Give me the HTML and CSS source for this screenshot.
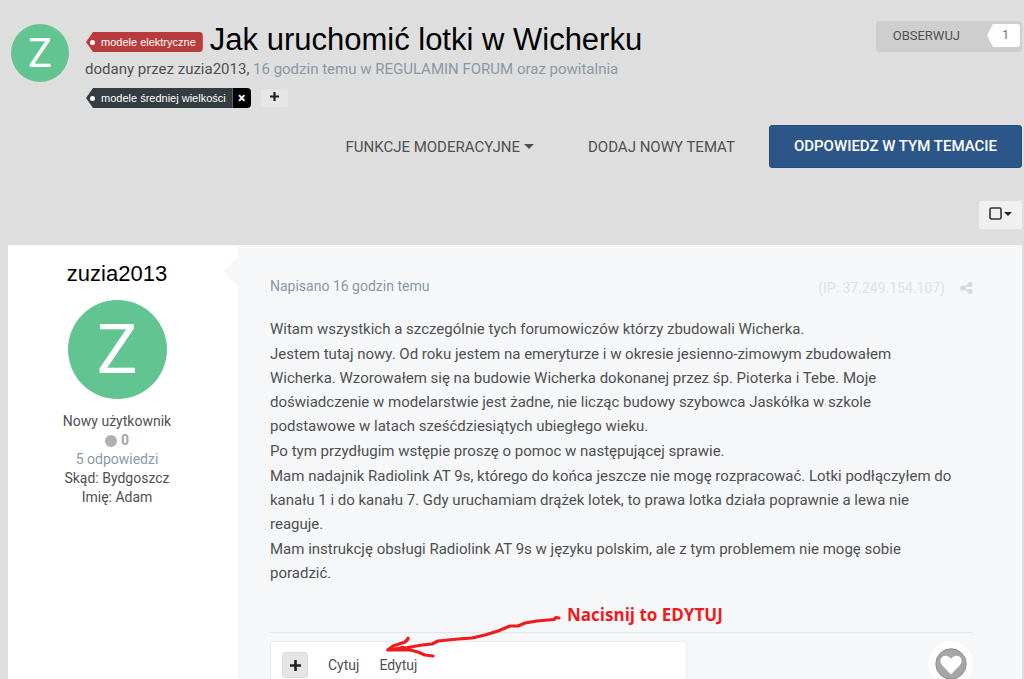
FILE: index.html
```
<!DOCTYPE html>
<html lang="pl">
<head>
  <meta charset="UTF-8" />
  <meta name="viewport" content="width=device-width, initial-scale=1.0" />
  <title>Jak uruchomić lotki w Wicherku</title>
  <link rel="stylesheet" href="styles.css">
</head>
<body>
  <header class="topic-header">
    <a href="#" class="avatar avatar-small">Z</a>
    <div class="topic-info">
      <div class="title-row">
        <a href="#" class="tag tag-red">modele elektryczne</a>
        <h1>Jak uruchomić lotki w Wicherku</h1>
      </div>
      <p class="byline">dodany przez <a href="#">zuzia2013</a>, <span class="muted">16 godzin temu w <a href="#">REGULAMIN FORUM oraz powitalnia</a></span></p>
      <div class="tag-row">
        <div class="tag-group">
          <a href="#" class="tag tag-dark">modele średniej wielkości</a>
          <button class="tag-remove" aria-label="Usuń tag">×</button>
        </div>
        <button class="tag-add" aria-label="Dodaj tag">
          <svg width="9" height="9" viewBox="0 0 9 9"><path d="M4.500 0v9M0 4.500h9" stroke="#222" stroke-width="2.200"/></svg>
        </button>
      </div>
    </div>
    <div class="follow">
      <button class="follow-button">OBSERWUJ</button>
      <a href="#" class="follow-count">1</a>
    </div>
  </header>

  <nav class="topic-actions">
    <button class="link-button">FUNKCJE MODERACYJNE <span class="caret"></span></button>
    <a href="#" class="link-button">DODAJ NOWY TEMAT</a>
    <a href="#" class="reply-button">ODPOWIEDZ W TYM TEMACIE</a>
  </nav>

  <div class="select-row">
    <button class="select-button" aria-label="Zaznacz posty">
      <svg width="13" height="13" viewBox="0 0 13 13"><rect x="1" y="1" width="11" height="11" rx="1.500" fill="none" stroke="#333" stroke-width="1.600"/></svg>
      <span class="caret caret-small"></span>
    </button>
  </div>

  <article class="post">
    <aside class="author">
      <h2>zuzia2013</h2>
      <a href="#" class="avatar avatar-large">Z</a>
      <ul class="author-info">
        <li>Nowy użytkownik</li>
        <li class="reputation"><span class="dot"></span>0</li>
        <li class="muted">5 odpowiedzi</li>
        <li>Skąd: Bydgoszcz</li>
        <li>Imię: Adam</li>
      </ul>
    </aside>

    <div class="post-main">
      <div class="post-meta">
        <a href="#" class="muted">Napisano 16 godzin temu</a>
        <div class="post-tools">
          <span>(IP: 37.249.154.107)</span>
          <a href="#" aria-label="Udostępnij">
            <svg width="13" height="12" viewBox="0 0 13 12"><path d="M10 2.500L3 6l7 3.500" fill="none" stroke="#d5d8de" stroke-width="1.800"/><circle cx="10" cy="2.500" r="2.500" fill="#d5d8de"/><circle cx="2.700" cy="6" r="2.600" fill="#d5d8de"/><circle cx="10" cy="9.500" r="2.500" fill="#d5d8de"/></svg>
          </a>
        </div>
      </div>

      <div class="post-text">
        <p>Witam wszystkich a szczególnie tych forumowiczów którzy zbudowali Wicherka.</p>
        <p>Jestem tutaj nowy. Od roku jestem na emeryturze i w okresie jesienno-zimowym zbudowałem Wicherka. Wzorowałem się na budowie Wicherka dokonanej przez śp. Pioterka i Tebe. Moje doświadczenie w modelarstwie jest żadne, nie licząc budowy szybowca Jaskółka w szkole podstawowe w latach sześćdziesiątych ubiegłego wieku.</p>
        <p>Po tym przydługim wstępie proszę o pomoc w następującej sprawie.</p>
        <p>Mam nadajnik Radiolink AT 9s, którego do końca jeszcze nie mogę rozpracować. Lotki podłączyłem do kanału 1 i do kanału 7. Gdy uruchamiam drążek lotek, to prawa lotka działa poprawnie a lewa nie reaguje.</p>
        <p>Mam instrukcję obsługi Radiolink AT 9s w języku polskim, ale z tym problemem nie mogę sobie poradzić.</p>
      </div>

      <footer class="post-footer">
        <div class="post-controls">
          <button class="quote-add" aria-label="Cytuj wiele">
            <svg width="11" height="11" viewBox="0 0 11 11"><path d="M5.500 0v11M0 5.500h11" stroke="#222" stroke-width="2.600"/></svg>
          </button>
          <a href="#">Cytuj</a>
          <a href="#">Edytuj</a>
        </div>
        <button class="like" aria-label="Lubię to">
          <svg width="32" height="32" viewBox="0 0 32 32"><circle cx="16" cy="16" r="15.200" fill="#a6a6a6" stroke="#8f8f8f" stroke-width="1"/><path d="M16 26.500L7.200 17.300C3 12.500 7 7 11.500 7.900c2.300.3 3.700 1.600 4.500 3.200.8-1.600 2.200-2.900 4.500-3.200C25 7 29 12.500 24.800 17.300z" fill="#fff"/></svg>
        </button>
        <div class="hint">
          <svg width="176" height="46" viewBox="0 0 176 46" fill="none" stroke="#ee1c1c" stroke-width="3.200" stroke-linejoin="round" stroke-linecap="round"><path d="M174 3l-3-.5-2 2-6 .5-11 1-12 2-7 3h-8l-12 5-13 4-13 3-14 1-20 2-6 3-10 1-17 3-17.300 2 5.300-4 12-4 3-3v-1M3 35h22l8 2 7 3 8 1"/><path d="M2.700 35l16-4 2 3z" fill="#ee1c1c" stroke-width="1"/></svg>
          <span>Nacisnij to EDYTUJ</span>
        </div>
      </footer>
    </div>
  </article>
</body>
</html>
```
FILE: styles.css
```
* {
  box-sizing: border-box;
  margin: 0;
  padding: 0;
}

body {
  font-family: Roboto, sans-serif;
  font-size: 15px;
  color: #505050;
  background-color: #dedede;
  padding: 20px 2px 0 8px;
  height: 100vh;
  overflow: hidden;
}

a {
  color: inherit;
  text-decoration: none;
}

button {
  font-family: inherit;
  color: inherit;
  border: none;
  background: none;
  cursor: pointer;
}

svg {
  display: block;
}

.muted {
  color: #8b98a4;
}

.avatar {
  display: flex;
  align-items: center;
  justify-content: center;
  flex-shrink: 0;
  border-radius: 50%;
  background-color: #62c491;
  color: #fff;
}

.avatar-small {
  width: 58px;
  height: 58px;
  margin: 4px 0 0 3px;
  font-size: 40px;
}

.avatar-large {
  width: 99px;
  height: 99px;
  font-size: 68px;
}

.topic-header {
  display: flex;
  align-items: flex-start;
}

.topic-info {
  flex: 1;
  margin-left: 16px;
}

.title-row {
  display: flex;
  align-items: center;
  gap: 7px;
  height: 40px;
}

h1 {
  font-family: "Liberation Sans", Arial, sans-serif;
  font-size: 31px;
  font-weight: normal;
  color: #000;
}

.tag {
  position: relative;
  height: 20px;
  padding: 0 7px 0 16px;
  font-family: "Liberation Sans", Arial, sans-serif;
  font-size: 11px;
  line-height: 20px;
  color: #fff;
  border-radius: 4px;
  clip-path: polygon(1px 50%, 8px 0, 100% 0, 100% 100%, 8px 100%);
}

.tag::before {
  content: "";
  position: absolute;
  left: 5px;
  top: 8px;
  width: 5px;
  height: 5px;
  border-radius: 50%;
  background-color: #fff;
}

.title-row .tag {
  margin-top: 4px;
}

.tag-red {
  background-color: #b83c3e;
}

.tag-dark {
  background-color: #343d42;
  border-radius: 0;
}

.byline {
  line-height: 18px;
}

.tag-row {
  display: flex;
  align-items: center;
  gap: 10px;
  margin-top: 10px;
}

.tag-group {
  display: flex;
}

.tag-remove {
  width: 18px;
  height: 20px;
  font-size: 14px;
  font-weight: bold;
  line-height: 20px;
  color: #fff;
  background-color: #000;
  border-radius: 0 4px 4px 0;
}

.tag-add {
  display: flex;
  align-items: center;
  justify-content: center;
  width: 27px;
  height: 18px;
  padding-bottom: 4px;
  background-color: #e6e6e6;
  border-radius: 2px;
}

.follow {
  display: flex;
  align-items: flex-start;
  height: 31px;
  margin-top: 1px;
  padding: 3px 2px 0 0;
  background-color: #cecece;
  border-radius: 3px;
}

.follow-button {
  padding: 0 27px 0 17px;
  font-size: 13px;
  line-height: 24px;
}

.follow-count {
  width: 33px;
  padding-left: 4px;
  font-size: 12px;
  line-height: 23px;
  text-align: center;
  color: #557282;
  background-color: #fff;
  border-radius: 3px;
  clip-path: polygon(0 50%, 6px 0, 100% 0, 100% 100%, 6px 100%);
}

.topic-actions {
  display: flex;
  align-items: center;
  justify-content: flex-end;
  margin-top: 17px;
}

.link-button {
  display: flex;
  align-items: center;
  gap: 4px;
  font-size: 15px;
  margin-right: 34px;
}

button.link-button {
  margin-right: 54px;
}

.caret {
  border: 5px solid transparent;
  border-top-color: currentColor;
  border-bottom: none;
}

.caret-small {
  border-width: 4px;
  border-bottom: none;
  color: #222;
}

.reply-button {
  padding: 0 24px;
  font-size: 15px;
  font-weight: 500;
  line-height: 41px;
  color: #fff;
  background-color: #2c5687;
  border: 1px solid #254d7c;
  border-radius: 3px;
}

.select-row {
  display: flex;
  justify-content: flex-end;
  margin: 33px 0 16px;
}

.select-button {
  display: flex;
  align-items: center;
  justify-content: center;
  gap: 2px;
  width: 43px;
  height: 28px;
  padding-bottom: 3px;
  background-color: #f0f0f0;
  border-radius: 2px;
}

.post {
  display: flex;
  background-color: #fff;
}

.author {
  display: flex;
  flex-direction: column;
  align-items: center;
  flex-shrink: 0;
  width: 230px;
  padding: 16px 12px 0 0;
}

.author h2 {
  margin-bottom: 13px;
  font-family: "Liberation Sans", Arial, sans-serif;
  font-size: 22px;
  font-weight: normal;
  line-height: 26px;
  color: #000;
}

.author-info {
  margin-top: 13px;
  list-style: none;
  font-size: 14px;
  line-height: 19px;
  text-align: center;
}

.reputation {
  display: flex;
  align-items: center;
  justify-content: center;
  gap: 4px;
  font-weight: bold;
  color: #a6a6a6;
}

.dot {
  width: 12px;
  height: 12px;
  border-radius: 50%;
  background-color: #b0b0b0;
}

.post-main {
  position: relative;
  flex: 1;
  padding: 31px 49px 20px 32px;
  background-color: #f5f7f9;
}

/* pointer towards the author */
.post-main::before {
  content: "";
  position: absolute;
  left: -15px;
  top: 11px;
  border: 15px solid transparent;
  border-right-color: #f5f7f9;
  border-left: none;
}

.post-meta {
  display: flex;
  justify-content: space-between;
  font-size: 14px;
  line-height: 20px;
}

.post-tools {
  display: flex;
  align-items: center;
  gap: 15px;
  padding-top: 2px;
  color: #dfe1e7;
}

.post-text {
  display: flex;
  flex-direction: column;
  gap: 1px;
  margin-top: 19px;
  padding-right: 18px;
  line-height: 24px;
}

.post-footer {
  position: relative;
  display: flex;
  justify-content: space-between;
  margin-top: 47px;
  padding-top: 8px;
  border-top: 1px solid #e3e5e8;
}

.post-controls {
  display: flex;
  align-items: center;
  gap: 20px;
  width: 417px;
  height: 48px;
  padding: 0 11px;
  font-size: 14px;
  background-color: #fff;
  border: 1px solid #ebeef0;
  border-radius: 3px;
}

.quote-add {
  display: flex;
  align-items: center;
  justify-content: center;
  width: 26px;
  height: 26px;
  background-color: #e5e5e5;
  border: 1px solid #dcdcdc;
  border-radius: 3px;
}

.like {
  display: flex;
  align-items: center;
  justify-content: center;
  width: 45px;
  height: 45px;
  background-color: #fff;
  border-radius: 50%;
}

/* hand-drawn note laid over the post */
.hint {
  position: absolute;
  left: 115px;
  top: -18px;
  display: flex;
  align-items: flex-start;
  gap: 6px;
  pointer-events: none;
}

.hint span {
  margin-top: -12px;
  font-family: "Open Sans", sans-serif;
  font-size: 17px;
  font-weight: bold;
  line-height: 24px;
  color: #ee1c1c;
  white-space: nowrap;
}
```
